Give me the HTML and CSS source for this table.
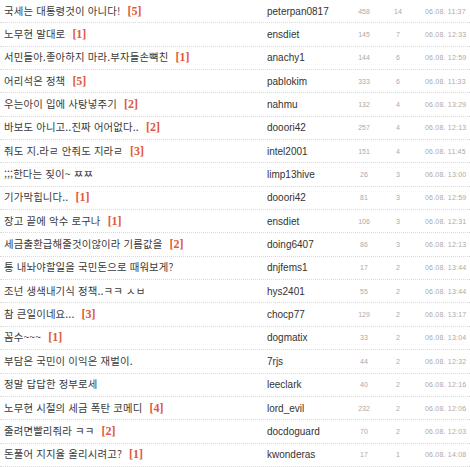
FILE: index.html
```html
<!DOCTYPE html>
<html lang="ko">
<head>
<meta charset="utf-8">
<title>게시판</title>
<link rel="stylesheet" href="styles.css">
</head>
<body>
<ul class="list">
  <li class="row"><span class="title">국세는 대통령것이 아니다! <b class="cnt">[5]</b></span><span class="author">peterpan0817</span><span class="views">458</span><span class="cmts">14</span><span class="date">06.08. 11:37</span></li>
  <li class="row"><span class="title">노무현 말대로 <b class="cnt">[1]</b></span><span class="author">ensdiet</span><span class="views">145</span><span class="cmts">7</span><span class="date">06.08. 12:33</span></li>
  <li class="row"><span class="title">서민들아.좋아하지 마라.부자들손뼉친 <b class="cnt">[1]</b></span><span class="author">anachy1</span><span class="views">144</span><span class="cmts">6</span><span class="date">06.08. 12:59</span></li>
  <li class="row"><span class="title">어리석은 정책 <b class="cnt">[5]</b></span><span class="author">pablokim</span><span class="views">333</span><span class="cmts">6</span><span class="date">06.08. 11:33</span></li>
  <li class="row"><span class="title">우는아이 입에 사탕넣주기 <b class="cnt">[2]</b></span><span class="author">nahmu</span><span class="views">132</span><span class="cmts">4</span><span class="date">06.08. 13:29</span></li>
  <li class="row"><span class="title">바보도 아니고..진짜 어어없다.. <b class="cnt">[2]</b></span><span class="author">dooori42</span><span class="views">257</span><span class="cmts">4</span><span class="date">06.08. 12:13</span></li>
  <li class="row"><span class="title">줘도 지.라ㄹ 안줘도 지라ㄹ <b class="cnt">[3]</b></span><span class="author">intel2001</span><span class="views">151</span><span class="cmts">4</span><span class="date">06.08. 11:45</span></li>
  <li class="row"><span class="title">;;;한다는 짖이~ ㅉㅉ</span><span class="author">limp13hive</span><span class="views">26</span><span class="cmts">3</span><span class="date">06.08. 13:00</span></li>
  <li class="row"><span class="title">기가막힙니다.. <b class="cnt">[1]</b></span><span class="author">dooori42</span><span class="views">81</span><span class="cmts">3</span><span class="date">06.08. 12:59</span></li>
  <li class="row"><span class="title">장고 끝에 악수 로구나 <b class="cnt">[1]</b></span><span class="author">ensdiet</span><span class="views">106</span><span class="cmts">3</span><span class="date">06.08. 12:31</span></li>
  <li class="row"><span class="title">세금출환급해줄것이않이라 기름값을 <b class="cnt">[2]</b></span><span class="author">doing6407</span><span class="views">86</span><span class="cmts">3</span><span class="date">06.08. 12:13</span></li>
  <li class="row"><span class="title">통 내놔야할일을 국민돈으로 때워보게?</span><span class="author">dnjfems1</span><span class="views">17</span><span class="cmts">2</span><span class="date">06.08. 13:44</span></li>
  <li class="row"><span class="title">조넌 생색내기식 정책..ㅋㅋ ㅅㅂ</span><span class="author">hys2401</span><span class="views">55</span><span class="cmts">2</span><span class="date">06.08. 13:44</span></li>
  <li class="row"><span class="title">참 큰일이네요... <b class="cnt">[3]</b></span><span class="author">chocp77</span><span class="views">129</span><span class="cmts">2</span><span class="date">06.08. 13:17</span></li>
  <li class="row"><span class="title">꼼수~~~ <b class="cnt">[1]</b></span><span class="author">dogmatix</span><span class="views">33</span><span class="cmts">2</span><span class="date">06.08. 13:04</span></li>
  <li class="row"><span class="title">부담은 국민이 이익은 재벌이.</span><span class="author">7rjs</span><span class="views">44</span><span class="cmts">2</span><span class="date">06.08. 12:32</span></li>
  <li class="row"><span class="title">정말 답답한 정부로세</span><span class="author">leeclark</span><span class="views">40</span><span class="cmts">2</span><span class="date">06.08. 12:16</span></li>
  <li class="row"><span class="title">노무현 시절의 세금 폭탄 코메디 <b class="cnt">[4]</b></span><span class="author">lord_evil</span><span class="views">232</span><span class="cmts">2</span><span class="date">06.08. 12:06</span></li>
  <li class="row"><span class="title">줄려면빨리줘라 ㅋㅋ <b class="cnt">[2]</b></span><span class="author">docdoguard</span><span class="views">70</span><span class="cmts">2</span><span class="date">06.08. 12:03</span></li>
  <li class="row"><span class="title">돈풀어 지지율 올리시려고? <b class="cnt">[1]</b></span><span class="author">kwonderas</span><span class="views">17</span><span class="cmts">1</span><span class="date">06.08. 14:08</span></li>
</ul>
</body>
</html>
```
FILE: styles.css
```css
html, body {
  margin: 0;
  padding: 0;
  background: #fff;
}
body {
  font-family: "Noto Sans CJK KR", "Noto Sans", sans-serif;
  color: #333;
}
.list {
  list-style: none;
  margin: 0;
  padding: 0;
}
.row {
  box-sizing: border-box;
  height: 23.35px;
  display: grid;
  grid-template-columns: 263px 78px 38px 30px 1fr;
  align-items: center;
  padding-left: 4px;
  border-bottom: 1px dotted #d9d9d9;
}
.title {
  font-size: 10.4px;
  letter-spacing: 0.15px;
  color: #3a3a3a;
  white-space: nowrap;
  overflow: hidden;
  line-height: 14px;
  padding-bottom: 1px;
}
.cnt {
  font-family: "Liberation Serif", serif;
  font-weight: bold;
  font-size: 12px;
  color: #e0573e;
  margin-left: 4px;
  letter-spacing: 0;
}
.author {
  font-family: "Liberation Sans", sans-serif;
  font-size: 10px;
  color: #333;
}
.views, .cmts {
  font-family: "Liberation Sans", sans-serif;
  font-size: 7px;
  color: #aaa;
  text-align: center;
}
.date {
  font-family: "Liberation Sans", sans-serif;
  font-size: 7px;
  color: #aaa;
  padding-left: 12px;
  letter-spacing: 0.2px;
}
```
